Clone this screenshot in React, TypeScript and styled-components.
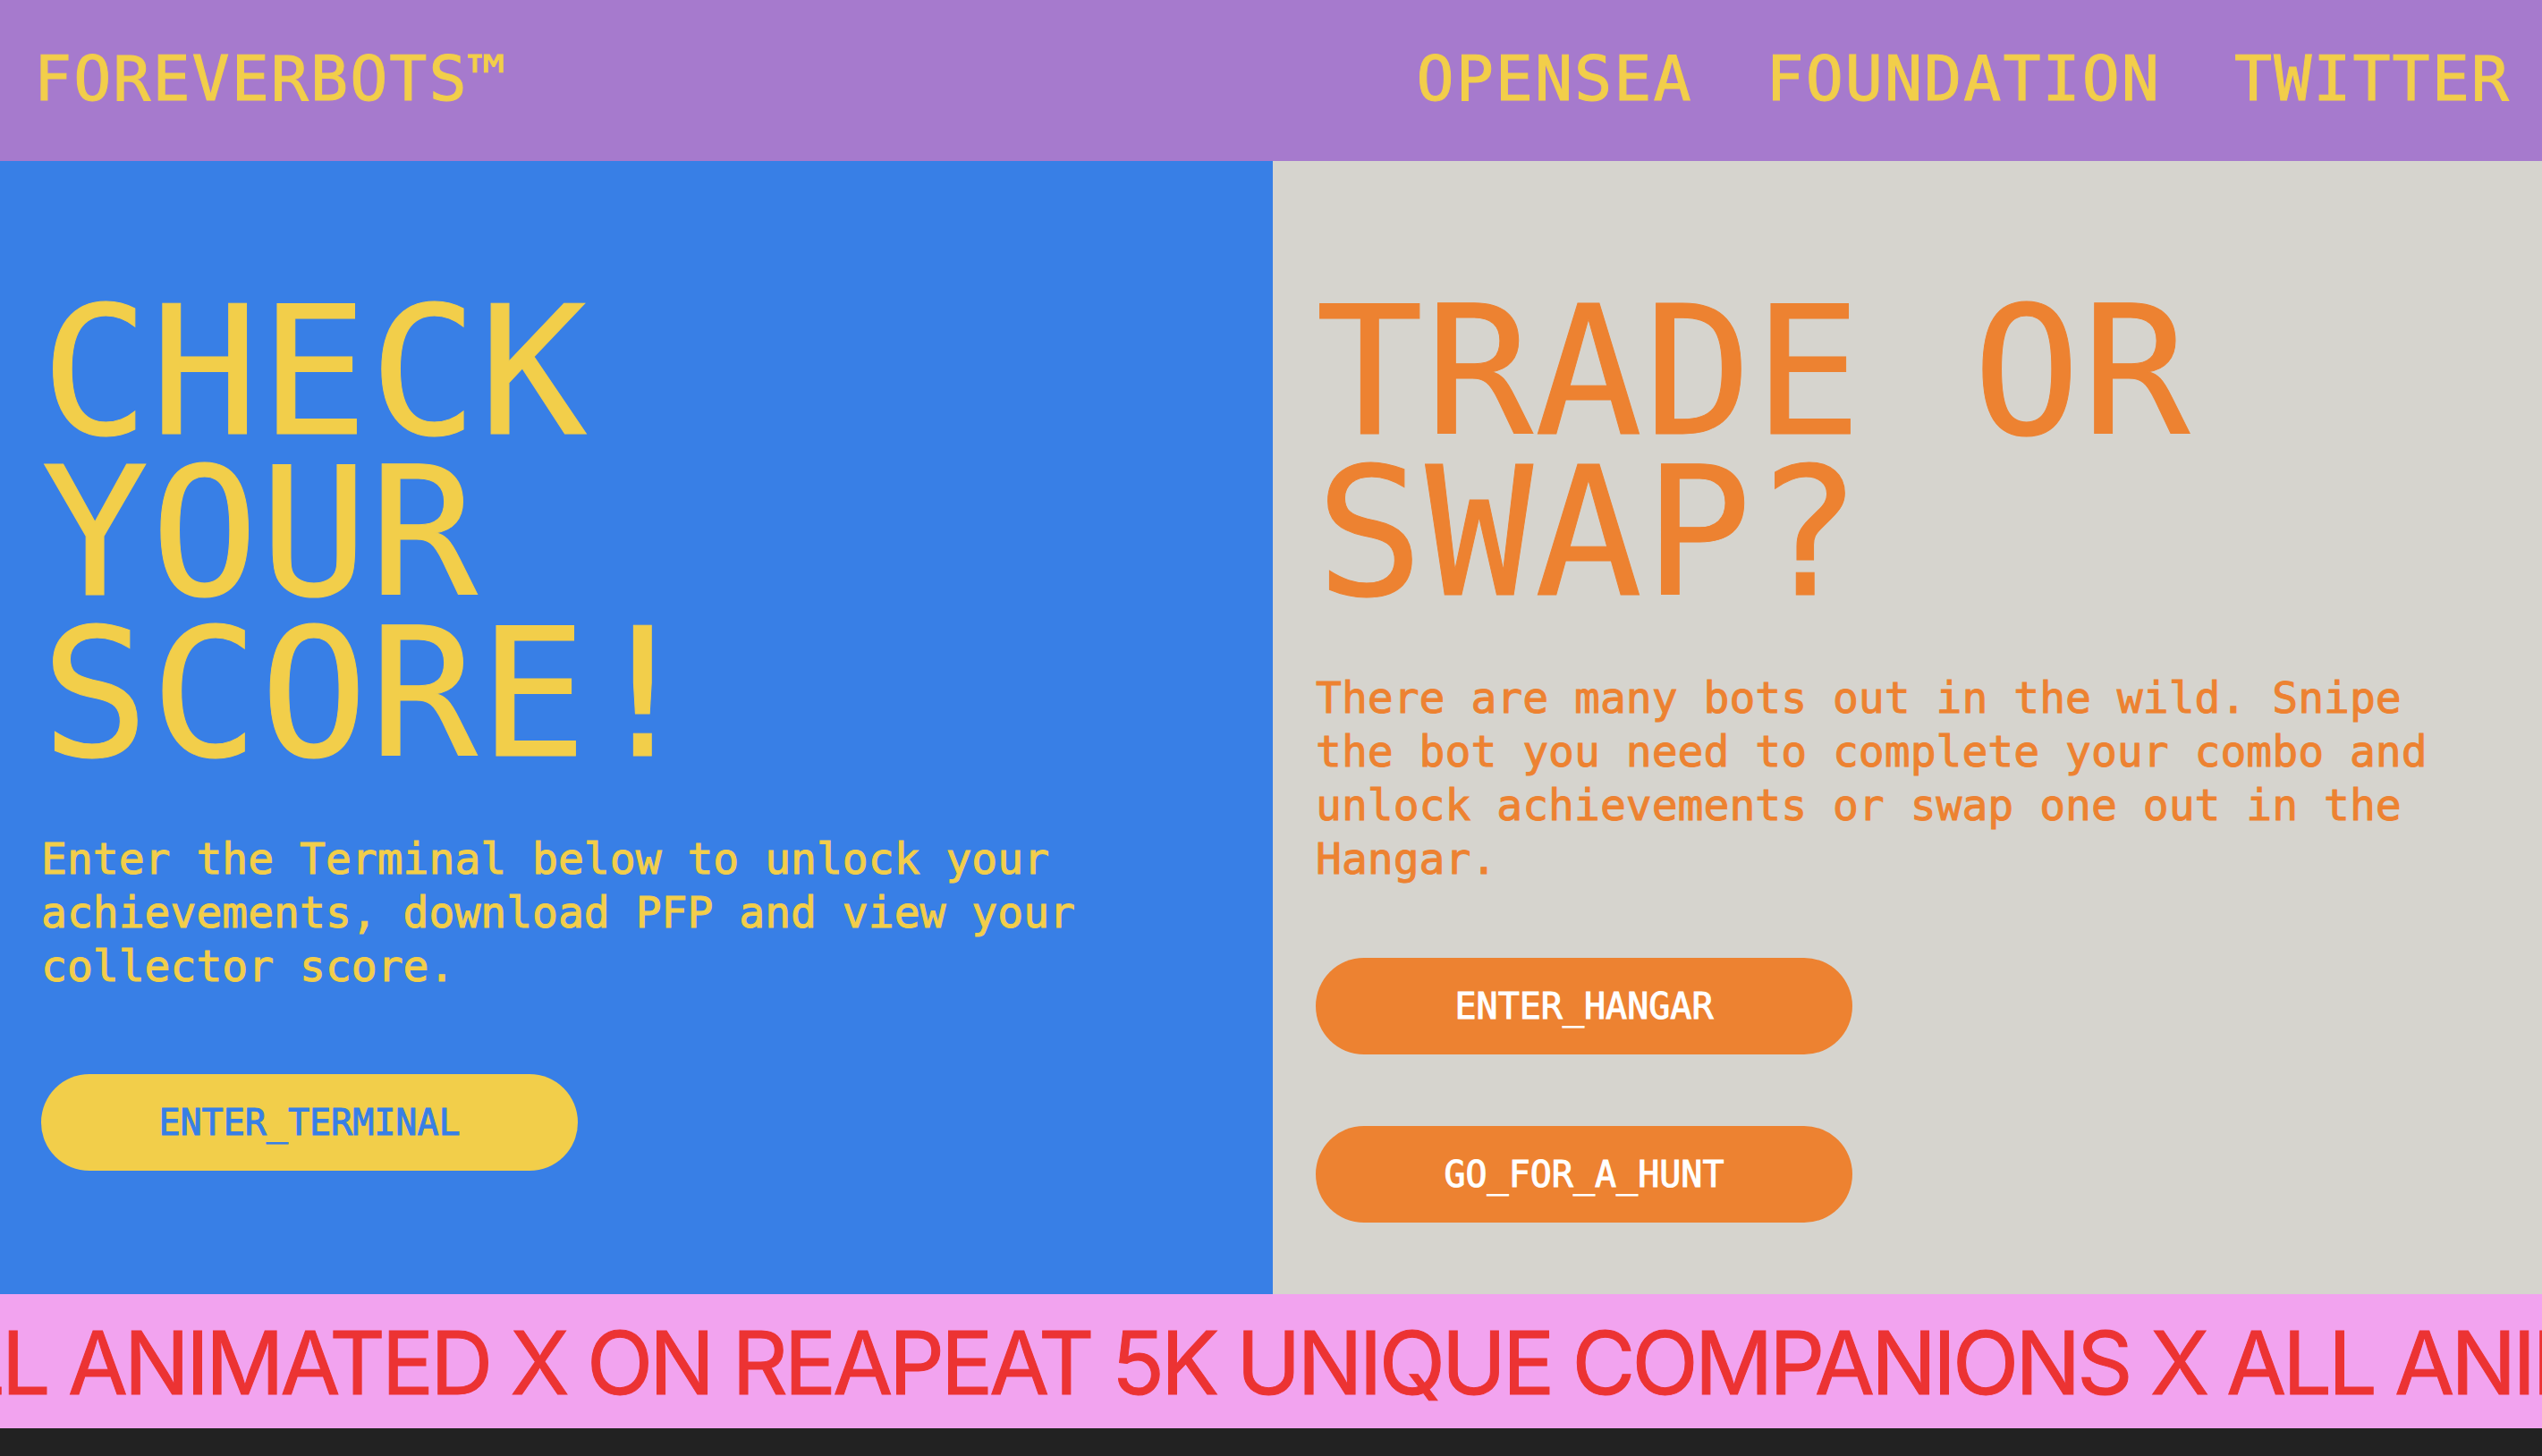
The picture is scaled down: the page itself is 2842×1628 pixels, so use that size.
import React from "react";
import styled, { createGlobalStyle } from "styled-components";

const mono = `"DejaVu Sans Mono", "Liberation Mono", monospace`;
const sans = `Inter, "Liberation Sans", sans-serif`;

const color = {
  purple: "#a67acd",
  yellow: "#f2ce4a",
  blue: "#387fe6",
  stone: "#d6d4ce",
  orange: "#ed8231",
  pink: "#f2a3ef",
  red: "#ec3333",
  dark: "#222222",
  white: "#ffffff",
};

const GlobalStyle = createGlobalStyle`
  *, *::before, *::after { box-sizing: border-box; }
  body {
    margin: 0;
    background: ${color.dark};
    font-family: ${mono};
    overflow-x: hidden;
    /* a hairline stroke gives the type its sturdier stems */
    -webkit-text-stroke: 1px;
  }
  h1, h2, p { margin: 0; font-weight: 400; }
`;

const Header = styled.header`
  display: flex;
  align-items: center;
  justify-content: space-between;
  padding: 48px 35px 52px 38px;
  background: ${color.purple};
  font-size: 70px;
  line-height: 80px;
  letter-spacing: 2px;
`;

const HeaderLink = styled.a`
  color: ${color.yellow};
  text-decoration: none;
`;

const Nav = styled.nav`
  display: flex;
  gap: 82px;
`;

const Panels = styled.main`
  display: grid;
  grid-template-columns: calc(50% + 2px) 1fr;
`;

const Panel = styled.section<{ $bg: string; $fg: string; $inset: number }>`
  display: flex;
  flex-direction: column;
  align-items: flex-start;
  padding: 146px ${(p) => p.$inset}px 80px;
  background: ${(p) => p.$bg};
  color: ${(p) => p.$fg};
`;

const Title = styled.h2`
  font-size: 200px;
  line-height: 180px;
  letter-spacing: 2px;
`;

const Copy = styled.p`
  margin-top: 64px;
  font-size: 48px;
  line-height: 60px;
`;

const Actions = styled.div<{ $top: number }>`
  display: grid;
  gap: 80px;
  margin-top: ${(p) => p.$top}px;
`;

const PillButton = styled.button<{ $bg: string; $fg: string }>`
  width: 600px;
  height: 108px;
  padding: 0;
  border: 0;
  border-radius: 54px;
  background: ${(p) => p.$bg};
  color: ${(p) => p.$fg};
  font-family: ${mono};
  font-size: 40px;
  line-height: 48px;
  cursor: pointer;
`;

const Marquee = styled.div`
  display: flex;
  height: 150px;
  align-items: center;
  padding-top: 4px;
  overflow: hidden;
  background: ${color.pink};
`;

const MarqueeText = styled.p`
  flex: none;
  margin-left: -112px;
  color: ${color.red};
  font-family: ${sans};
  font-size: 97px;
  line-height: 120px;
  letter-spacing: -4px;
  white-space: pre;
`;

const slogan = "ALL ANIMATED X ON REAPEAT 5K UNIQUE COMPANIONS X ";

export default function App() {
  return (
    <>
      <GlobalStyle />
      <Header>
        <HeaderLink href="#home">FOREVERBOTS™</HeaderLink>
        <Nav>
          <HeaderLink href="#opensea">OPENSEA</HeaderLink>
          <HeaderLink href="#foundation">FOUNDATION</HeaderLink>
          <HeaderLink href="#twitter">TWITTER</HeaderLink>
        </Nav>
      </Header>
      <Panels>
        <Panel $bg={color.blue} $fg={color.yellow} $inset={46}>
          <Title>
            CHECK
            <br />
            YOUR
            <br />
            SCORE!
          </Title>
          <Copy>
            Enter the Terminal below to unlock your achievements, download PFP
            and view your collector score.
          </Copy>
          <Actions $top={91}>
            <PillButton $bg={color.yellow} $fg={color.blue}>
              ENTER_TERMINAL
            </PillButton>
          </Actions>
        </Panel>
        <Panel $bg={color.stone} $fg={color.orange} $inset={48}>
          <Title>
            TRADE OR
            <br />
            SWAP?
          </Title>
          <Copy>
            There are many bots out in the wild. Snipe the bot you need to
            complete your combo and unlock achievements or swap one out in the
            Hangar.
          </Copy>
          <Actions $top={81}>
            <PillButton $bg={color.orange} $fg={color.white}>
              ENTER_HANGAR
            </PillButton>
            <PillButton $bg={color.orange} $fg={color.white}>
              GO_FOR_A_HUNT
            </PillButton>
          </Actions>
        </Panel>
      </Panels>
      <Marquee>
        <MarqueeText>{slogan.repeat(2)}</MarqueeText>
      </Marquee>
    </>
  );
}
